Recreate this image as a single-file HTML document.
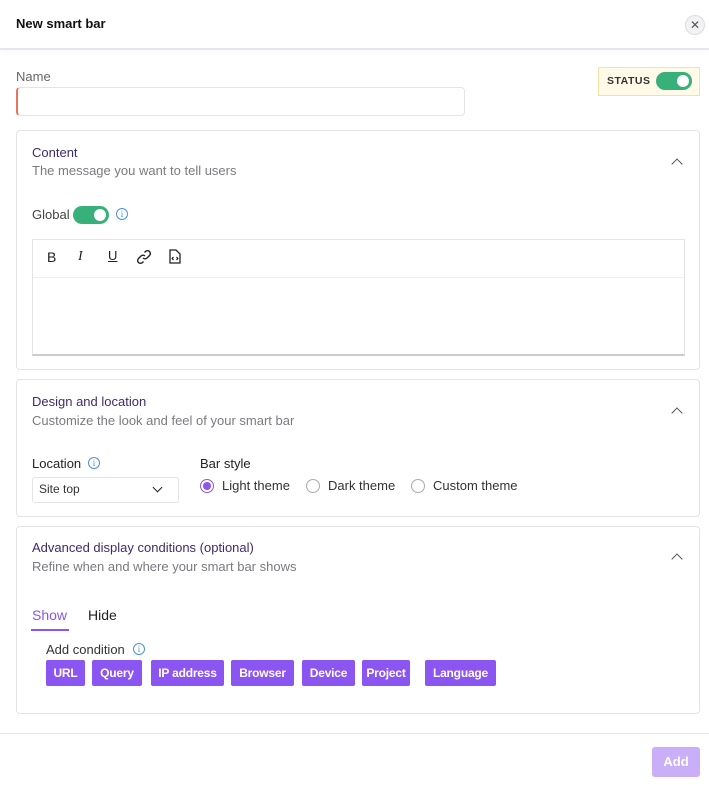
<!DOCTYPE html>
<html><head><style>
*{box-sizing:border-box;margin:0;padding:0}
body{width:709px;height:785px;background:#fff;font-family:"Liberation Sans",sans-serif;font-size:13px;color:#333;position:relative;overflow:hidden}
.a{position:absolute;white-space:nowrap}
.card{position:absolute;left:16px;width:684px;border:1px solid #e3e3e8;border-radius:4px}
.t{color:#3d2b6e;font-size:13px}
.s{color:#7a7a80;font-size:13px}
.tog{position:absolute;width:36px;height:18px;border-radius:9px;background:#38b07a}
.tog::after{content:"";position:absolute;right:3px;top:3px;width:12px;height:12px;border-radius:50%;background:#fff}
.info{position:absolute;width:12px;height:12px;border:1px solid #4a90e2;border-radius:50%;color:#4a90e2;font-size:9px;line-height:10px;text-align:center;font-family:"Liberation Serif",serif}
.chev{position:absolute;width:8px;height:8px;border-left:1.3px solid #555;border-top:1.3px solid #555;transform:rotate(45deg)}
.radio{position:absolute;width:14px;height:14px;border:1px solid #aaa;border-radius:50%}
.btn{position:absolute;top:660px;height:26px;background:#8a55f0;color:#fff;font-weight:bold;font-size:12px;line-height:26px;text-align:center;border-radius:2px;letter-spacing:-.2px}
</style></head><body>
<div class="a" style="left:16px;top:16px;font-weight:bold;font-size:13px;color:#111">New smart bar</div>
<div class="a" style="left:685px;top:15px;width:20px;height:20px;border-radius:50%;background:#f2f2f4;border:1px solid #ddd;text-align:center;line-height:18px;font-size:12px;color:#555">✕</div>
<div class="a" style="left:0;top:48px;width:709px;height:2px;background:#e6e6ef;box-shadow:0 2px 4px rgba(0,0,0,.05)"></div>

<div class="a" style="left:16px;top:69px;color:#666">Name</div>
<div class="a" style="left:16px;top:87px;width:449px;height:29px;border:1px solid #e4e4e8;border-left:2px solid #e8735f;border-radius:4px"></div>
<div class="a" style="left:598px;top:67px;width:102px;height:29px;background:#fffbe8;border:1px solid #f3e2a4"></div>
<div class="a" style="left:607px;top:75px;font-size:10.5px;font-weight:bold;color:#333;letter-spacing:.5px">STATUS</div>
<div class="tog" style="left:656px;top:72px"></div>

<div class="card" style="top:130px;height:240px"></div>
<div class="a t" style="left:32px;top:145px">Content</div>
<div class="a s" style="left:32px;top:163px">The message you want to tell users</div>
<div class="chev" style="left:673px;top:160px"></div>
<div class="a" style="left:32px;top:207px;color:#444">Global</div>
<div class="tog" style="left:73px;top:206px"></div>
<div class="info" style="left:116px;top:208px">i</div>
<div class="a" style="left:32px;top:239px;width:653px;height:117px;border:1px solid #e4e4e8;border-bottom:2px solid #ccc"></div>
<div class="a" style="left:33px;top:277px;width:651px;height:1px;background:#eee"></div>
<div class="a" style="left:47px;top:249px;font-size:14px;color:#222">B</div>
<div class="a" style="left:78px;top:249px;font-size:14px;font-style:italic;font-family:'Liberation Serif',serif;color:#222">I</div>
<div class="a" style="left:108px;top:248px;font-size:13px;text-decoration:underline;color:#222">U</div>
<svg class="a" style="left:136px;top:249px" width="16" height="16" viewBox="0 0 16 16" fill="none" stroke="#222" stroke-width="1.4"><path d="M7 9a3 3 0 0 0 4 0l2.5-2.5a2.8 2.8 0 0 0-4-4L8.5 3.5"/><path d="M9 7a3 3 0 0 0-4 0L2.5 9.5a2.8 2.8 0 0 0 4 4l1-1"/></svg>
<svg class="a" style="left:169px;top:249px" width="12" height="15" viewBox="0 0 12 15" fill="none" stroke="#222" stroke-width="1.3"><path d="M1 1h6l4 4v9H1z"/><path d="M4.5 8l-1.3 1.5 1.3 1.5M7.5 8l1.3 1.5-1.3 1.5"/></svg>

<div class="card" style="top:379px;height:138px"></div>
<div class="a t" style="left:32px;top:394px">Design and location</div>
<div class="a s" style="left:32px;top:413px">Customize the look and feel of your smart bar</div>
<div class="chev" style="left:673px;top:409px"></div>
<div class="a" style="left:32px;top:456px;color:#222">Location</div>
<div class="info" style="left:88px;top:457px">i</div>
<div class="a" style="left:32px;top:477px;width:147px;height:26px;border:1px solid #e4e4e8;border-radius:3px"></div>
<div class="a" style="left:39px;top:482px;font-size:12px;color:#333">Site top</div>
<div class="a" style="left:154px;top:484px;width:7px;height:7px;border-right:1.5px solid #222;border-bottom:1.5px solid #222;transform:rotate(45deg)"></div>
<div class="a" style="left:200px;top:456px;color:#222">Bar style</div>
<div class="radio" style="left:200px;top:479px;border-color:#8a55f0"><div style="position:absolute;left:2px;top:2px;width:8px;height:8px;border-radius:50%;background:#8a55f0"></div></div>
<div class="a" style="left:222px;top:478px;color:#333">Light theme</div>
<div class="radio" style="left:306px;top:479px"></div>
<div class="a" style="left:328px;top:478px;color:#333">Dark theme</div>
<div class="radio" style="left:411px;top:479px"></div>
<div class="a" style="left:433px;top:478px;color:#333">Custom theme</div>

<div class="card" style="top:526px;height:188px"></div>
<div class="a t" style="left:32px;top:540px">Advanced display conditions (optional)</div>
<div class="a s" style="left:32px;top:559px">Refine when and where your smart bar shows</div>
<div class="chev" style="left:673px;top:555px"></div>
<div class="a" style="left:32px;top:607px;font-size:14px;color:#8a55f0">Show</div>
<div class="a" style="left:31px;top:629px;width:38px;height:2px;background:#8a55f0"></div>
<div class="a" style="left:88px;top:607px;font-size:14px;color:#222">Hide</div>
<div class="a" style="left:46px;top:642px;color:#333">Add condition</div>
<div class="info" style="left:133px;top:643px">i</div>
<div class="btn" style="left:46px;width:39px">URL</div>
<div class="btn" style="left:92px;width:50px">Query</div>
<div class="btn" style="left:151px;width:73px">IP address</div>
<div class="btn" style="left:231px;width:63px">Browser</div>
<div class="btn" style="left:302px;width:53px">Device</div>
<div class="btn" style="left:362px;width:48px">Project</div>
<div class="btn" style="left:425px;width:71px">Language</div>

<div class="a" style="left:0;top:733px;width:709px;height:1px;background:#e6e6ef"></div>
<div class="a" style="left:652px;top:747px;width:48px;height:30px;background:#c9aef8;border-radius:3px;color:#fff;font-weight:bold;text-align:center;line-height:30px">Add</div>
</body></html>
